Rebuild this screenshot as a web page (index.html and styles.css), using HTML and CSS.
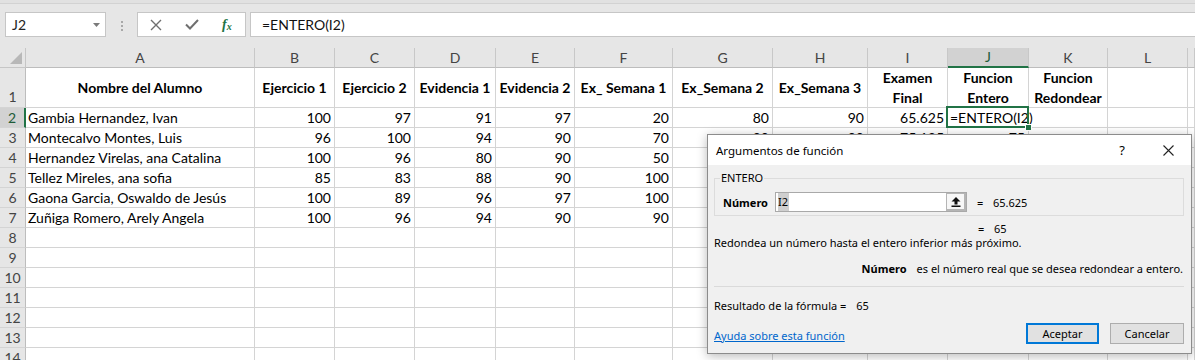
FILE: index.html
```html
<!DOCTYPE html>
<html lang="es">
<head>
<meta charset="utf-8">
<title>Excel - ENTERO</title>
<link rel="stylesheet" href="styles.css">
</head>
<body>
<div class="app">
  <div class="fbar">
    <div class="namebox"><span>J2</span><svg class="dd" width="7" height="4" viewBox="0 0 7 4"><polygon points="0,0 7,0 3.5,4" fill="#7a7a7a"/></svg></div>
    <div class="grip"><i></i><i></i><i></i></div>
    <div class="fbtns">
      <svg class="ic-x" width="12" height="12" viewBox="0 0 12 12"><path d="M1 1 L11 11 M11 1 L1 11" stroke="#6f6f6f" stroke-width="1.4" fill="none"/></svg>
      <svg class="ic-ok" width="14" height="11" viewBox="0 0 14 11"><path d="M1 5.5 L5 9.5 L13 1" stroke="#6f6f6f" stroke-width="2" fill="none"/></svg>
      <span class="fx">f<sub>x</sub></span>
    </div>
    <div class="finput">=ENTERO(I2)</div>
  </div>

  <div class="sheet">
    <div class="corner"><svg width="12" height="12" viewBox="0 0 12 12"><polygon points="12,0 12,12 0,12" fill="#b8b8b8"/></svg></div>
    <div class="ch">A</div><div class="ch">B</div><div class="ch">C</div><div class="ch">D</div><div class="ch">E</div><div class="ch">F</div><div class="ch">G</div><div class="ch">H</div><div class="ch">I</div><div class="ch ch-sel">J</div><div class="ch">K</div><div class="ch">L</div><div class="ch"></div>

    <div class="rh rh-bottom">1</div>
    <div class="c hd">Nombre del Alumno</div>
    <div class="c hd">Ejercicio 1</div>
    <div class="c hd">Ejercicio 2</div>
    <div class="c hd">Evidencia 1</div>
    <div class="c hd">Evidencia 2</div>
    <div class="c hd">Ex_ Semana 1</div>
    <div class="c hd">Ex_Semana 2</div>
    <div class="c hd">Ex_Semana 3</div>
    <div class="c hd">Examen<br>Final</div>
    <div class="c hd">Funcion<br>Entero</div>
    <div class="c hd">Funcion<br>Redondear</div>
    <div class="c"></div><div class="c"></div>

    <div class="rh rh-sel">2</div>
    <div class="c">Gambia Hernandez, Ivan</div>
    <div class="c n">100</div><div class="c n">97</div><div class="c n">91</div><div class="c n">97</div><div class="c n">20</div><div class="c n">80</div><div class="c n">90</div><div class="c n">65.625</div>
    <div class="c sel">=ENTERO(I2)</div><div class="c"></div><div class="c"></div><div class="c"></div>

    <div class="rh">3</div>
    <div class="c">Montecalvo Montes, Luis</div>
    <div class="c n">96</div><div class="c n">100</div><div class="c n">94</div><div class="c n">90</div><div class="c n">70</div><div class="c n">80</div><div class="c n">90</div><div class="c n">75.125</div>
    <div class="c n">75</div><div class="c"></div><div class="c"></div><div class="c"></div>

    <div class="rh">4</div>
    <div class="c">Hernandez Virelas, ana Catalina</div>
    <div class="c n">100</div><div class="c n">96</div><div class="c n">80</div><div class="c n">90</div><div class="c n">50</div><div class="c n">80</div><div class="c n">90</div><div class="c n">72.5</div>
    <div class="c n">72</div><div class="c"></div><div class="c"></div><div class="c"></div>

    <div class="rh">5</div>
    <div class="c">Tellez Mireles, ana sofia</div>
    <div class="c n">85</div><div class="c n">83</div><div class="c n">88</div><div class="c n">90</div><div class="c n">100</div><div class="c n">90</div><div class="c n">90</div><div class="c n">77</div>
    <div class="c n">77</div><div class="c"></div><div class="c"></div><div class="c"></div>

    <div class="rh">6</div>
    <div class="c">Gaona Garcia, Oswaldo de Jesús</div>
    <div class="c n">100</div><div class="c n">89</div><div class="c n">96</div><div class="c n">97</div><div class="c n">100</div><div class="c n">90</div><div class="c n">90</div><div class="c n">82.75</div>
    <div class="c n">82</div><div class="c"></div><div class="c"></div><div class="c"></div>

    <div class="rh">7</div>
    <div class="c">Zuñiga Romero, Arely Angela</div>
    <div class="c n">100</div><div class="c n">96</div><div class="c n">94</div><div class="c n">90</div><div class="c n">90</div><div class="c n">90</div><div class="c n">90</div><div class="c n">81.25</div>
    <div class="c n">81</div><div class="c"></div><div class="c"></div><div class="c"></div>

    <div class="rh">8</div><div class="c"></div><div class="c"></div><div class="c"></div><div class="c"></div><div class="c"></div><div class="c"></div><div class="c"></div><div class="c"></div><div class="c"></div><div class="c"></div><div class="c"></div><div class="c"></div><div class="c"></div>
    <div class="rh">9</div><div class="c"></div><div class="c"></div><div class="c"></div><div class="c"></div><div class="c"></div><div class="c"></div><div class="c"></div><div class="c"></div><div class="c"></div><div class="c"></div><div class="c"></div><div class="c"></div><div class="c"></div>
    <div class="rh">10</div><div class="c"></div><div class="c"></div><div class="c"></div><div class="c"></div><div class="c"></div><div class="c"></div><div class="c"></div><div class="c"></div><div class="c"></div><div class="c"></div><div class="c"></div><div class="c"></div><div class="c"></div>
    <div class="rh">11</div><div class="c"></div><div class="c"></div><div class="c"></div><div class="c"></div><div class="c"></div><div class="c"></div><div class="c"></div><div class="c"></div><div class="c"></div><div class="c"></div><div class="c"></div><div class="c"></div><div class="c"></div>
    <div class="rh">12</div><div class="c"></div><div class="c"></div><div class="c"></div><div class="c"></div><div class="c"></div><div class="c"></div><div class="c"></div><div class="c"></div><div class="c"></div><div class="c"></div><div class="c"></div><div class="c"></div><div class="c"></div>
    <div class="rh">13</div><div class="c"></div><div class="c"></div><div class="c"></div><div class="c"></div><div class="c"></div><div class="c"></div><div class="c"></div><div class="c"></div><div class="c"></div><div class="c"></div><div class="c"></div><div class="c"></div><div class="c"></div>
    <div class="rh">14</div><div class="c"></div><div class="c"></div><div class="c"></div><div class="c"></div><div class="c"></div><div class="c"></div><div class="c"></div><div class="c"></div><div class="c"></div><div class="c"></div><div class="c"></div><div class="c"></div><div class="c"></div>
  </div>

  <div class="dlg">
    <div class="dlg-title">
      <span class="dlg-name">Argumentos de función</span>
      <span class="dlg-help">?</span>
      <span class="dlg-close"><svg width="11" height="11" viewBox="0 0 11 11"><path d="M0.5 0.5 L10.5 10.5 M10.5 0.5 L0.5 10.5" stroke="#222" stroke-width="1.1" fill="none"/></svg></span>
    </div>
    <div class="dlg-body">
      <div class="grp">
        <span class="grp-label">ENTERO</span>
        <div class="arg">
          <span class="arg-name">Número</span>
          <div class="arg-input">
            <span class="arg-val"><span class="hl">I2</span></span>
            <span class="arg-btn"><svg width="10" height="10" viewBox="0 0 10 10"><polygon points="5,0 9.5,4.5 6.5,4.5 6.5,7.5 3.5,7.5 3.5,4.5 0.5,4.5" fill="#111"/><rect x="0.5" y="8.5" width="9" height="1.5" fill="#111"/></svg></span>
          </div>
          <span class="eq">=</span><span>65.625</span>
        </div>
      </div>
      <div class="res-line"><span class="eq">=</span><span>65</span></div>
      <p class="desc">Redondea un número hasta el entero inferior más próximo.</p>
      <p class="argdesc"><b>Número</b>es el número real que se desea redondear a entero.</p>
      <div class="sep"></div>
      <p class="result">Resultado de la fórmula =<span class="rv">65</span></p>
      <div class="dlg-foot">
        <a class="help">Ayuda sobre esta función</a>
        <button class="btn btn-primary">Aceptar</button>
        <button class="btn">Cancelar</button>
      </div>
    </div>
  </div>
</div>
</body>
</html>
```
FILE: styles.css
```css
html, body {
  margin: 0;
  padding: 0;
  background: #ffffff;
  overflow: hidden;
}

.app {
  position: relative;
  width: 1195px;
  height: 360px;
  overflow: hidden;
  font-family: Lato, "Liberation Sans", sans-serif;
}

/* ---------- formula bar ---------- */
.fbar {
  height: 48px;
  box-sizing: border-box;
  padding: 12px 0 0 5px;
  display: flex;
  align-items: flex-start;
  background: linear-gradient(#e1e1e1 0 3px, #d2d2d2 3px 4px, #e6e6e6 4px);
}

.namebox {
  width: 101px;
  height: 25px;
  box-sizing: border-box;
  border: 1px solid #c6c6c6;
  background: #fff;
  display: flex;
  align-items: center;
  justify-content: space-between;
  padding: 0 5px 0 6px;
  font-size: 14px;
  color: #222;
}

.grip {
  width: 2px;
  margin: 0 14px 0 15px;
  padding-top: 9px;
  display: flex;
  flex-direction: column;
  gap: 2px;
}

.grip i {
  display: block;
  width: 2px;
  height: 2px;
  background: #a8a8a8;
}

.fbtns {
  width: 109px;
  height: 25px;
  box-sizing: border-box;
  border: 1px solid #c6c6c6;
  background: #fff;
  display: flex;
  align-items: center;
  padding-left: 12px;
}

.ic-x { margin-right: 23px; }
.ic-ok { margin-right: 23px; }

.fx {
  font-family: "Liberation Serif", serif;
  font-style: italic;
  font-weight: 700;
  font-size: 14px;
  color: #217346;
  line-height: 1;
}

.fx sub {
  font-size: 10px;
  vertical-align: -1px;
}

.finput {
  flex: 1;
  margin-left: 4px;
  height: 25px;
  box-sizing: border-box;
  border: 1px solid #c6c6c6;
  border-right: none;
  background: #fff;
  padding-left: 11px;
  font-size: 14px;
  line-height: 23px;
  color: #111;
}

/* ---------- sheet ---------- */
.sheet {
  display: grid;
  grid-template-columns: 26px 229px 80px 80px 81px 79px 98px 100px 95px 80px 81px 79px 80px 1fr;
  grid-template-rows: 20px 40px;
  grid-auto-rows: 20px;
  font-size: 14px;
  color: #000;
}

.sheet > div {
  box-sizing: border-box;
  border-right: 1px solid #d4d4d4;
  border-bottom: 1px solid #d4d4d4;
  white-space: nowrap;
}

.corner {
  background: #e6e6e6;
  display: flex;
  align-items: flex-end;
  justify-content: flex-end;
  padding: 0 3px 3px 0;
  border-color: #c6c6c6 !important;
}

.ch {
  background: #e6e6e6;
  text-align: center;
  color: #444;
  line-height: 19px;
  font-size: 14px;
  border-right-color: #c8c8c8 !important;
  border-bottom-color: #bdbdbd !important;
}

.ch-sel {
  background: #d2d2d2;
  color: #1e5c38;
  border-bottom: 2px solid #217346 !important;
  line-height: 18px;
}

.rh {
  background: #e6e6e6;
  color: #444;
  text-align: center;
  font-size: 14px;
  line-height: 19px;
  border-right-color: #bdbdbd !important;
  border-bottom-color: #d4d4d4;
}

.rh-bottom {
  display: flex;
  align-items: flex-end;
  justify-content: center;
  line-height: 20px;
}

.rh-sel {
  background: #d2d2d2;
  color: #1e5c38;
  border-right: 2px solid #217346 !important;
}

.c {
  padding: 0 3px 0 2px;
  line-height: 19px;
  overflow: visible;
}

.n { text-align: right; }

.hd {
  font-weight: 700;
  display: flex;
  align-items: center;
  justify-content: center;
  text-align: center;
  line-height: 20px;
  white-space: normal !important;
  padding: 0;
}

.sel {
  position: relative;
  padding-left: 2px;
}

.sel::after {
  content: "";
  position: absolute;
  left: -2px;
  top: -2px;
  right: -1px;
  bottom: -1px;
  border: 2px solid #217346;
}

.sel::before {
  content: "";
  position: absolute;
  right: -4px;
  bottom: -4px;
  width: 5px;
  height: 5px;
  background: #217346;
  border: 1px solid #fff;
  z-index: 2;
}

/* ---------- dialog ---------- */
.dlg {
  position: absolute;
  left: 707px;
  top: 134px;
  width: 485px;
  height: 220px;
  box-sizing: border-box;
  background: #f0f0f0;
  border: 1px solid #8c8c8c;
  box-shadow: 0 2px 10px rgba(0, 0, 0, 0.28);
  font-family: "Noto Sans", "Open Sans", sans-serif;
  font-size: 11px;
  color: #000;
  z-index: 5;
}

.dlg-title {
  height: 30px;
  background: #fff;
  display: flex;
  align-items: center;
  padding-left: 8px;
}

.dlg-name {
  flex: 1;
  font-size: 11.5px;
}

.dlg-help {
  width: 46px;
  text-align: center;
  font-size: 13px;
}

.dlg-close {
  width: 46px;
  display: flex;
  justify-content: center;
}

.dlg-body {
  padding: 13px 7px 0 6px;
}

.grp {
  position: relative;
  height: 38px;
  box-sizing: border-box;
  border: 1px solid #dcdcdc;
  padding: 13px 0 0 8px;
}

.grp-label {
  position: absolute;
  left: 5px;
  top: -8px;
  background: #f0f0f0;
  padding: 0 1px;
  line-height: 14px;
}

.arg {
  display: flex;
  align-items: center;
  height: 20px;
}

.arg-name {
  width: 52px;
  font-weight: 700;
}

.arg-input {
  width: 192px;
  height: 20px;
  box-sizing: border-box;
  border: 1px solid #a9a9a9;
  background: #fff;
  display: flex;
  align-items: stretch;
  margin-right: 10px;
}

.arg-val {
  flex: 1;
  padding-left: 2px;
  line-height: 18px;
}

.hl {
  background: #cfcfcf;
  padding: 1px 1px 2px 0;
}

.arg-btn {
  width: 20px;
  box-sizing: border-box;
  border: 1px solid #b5b5b5;
  border-right: 2px solid #b5b5b5;
  border-bottom: 2px solid #b5b5b5;
  background: #f7f7f7;
  display: flex;
  align-items: center;
  justify-content: center;
}

.eq {
  width: 16px;
}

.res-line {
  display: flex;
  padding-left: 264px;
  margin-top: 6px;
  line-height: 14px;
}

.desc {
  margin: 0;
  line-height: 14px;
}

.argdesc {
  margin: 12px 0 0;
  line-height: 14px;
  text-align: right;
  padding-right: 1px;
}

.argdesc b {
  margin-right: 10px;
}

.sep {
  height: 1px;
  background: #dadada;
  margin-top: 10px;
}

.result {
  margin: 12px 0 0;
  line-height: 14px;
}

.rv {
  margin-left: 10px;
}

.dlg-foot {
  display: flex;
  align-items: center;
  margin-top: 10px;
}

.help {
  flex: 1;
  color: #0066cc;
  text-decoration: underline;
  padding-top: 3px;
}

.btn {
  height: 21px;
  box-sizing: border-box;
  background: #e1e1e1;
  border: 1px solid #adadad;
  font-family: "Noto Sans", "Open Sans", sans-serif;
  font-size: 11px;
  color: #000;
  padding: 0;
  width: 74px;
  line-height: 17px;
}

.btn-primary {
  width: 73px;
  border: 2px solid #0078d7;
  margin-right: 11px;
}
```
